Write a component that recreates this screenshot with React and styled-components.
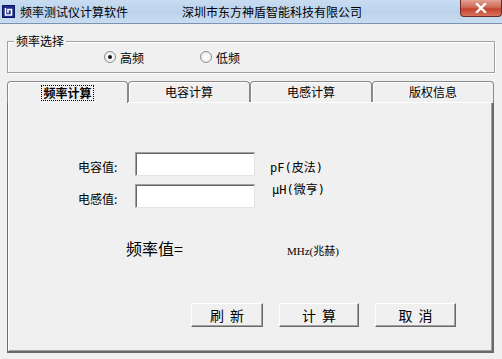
import React, { useState } from "react";
import styled, { createGlobalStyle } from "styled-components";

const GlobalStyle = createGlobalStyle`
  html, body {
    margin: 0;
    padding: 0;
    background: #f0f0f0;
  }
  body {
    font-family: "Noto Sans CJK SC", "Liberation Sans", sans-serif;
    font-size: 12px;
    color: #000;
  }
`;

const Window = styled.div`
  width: 502px;
  height: 359px;
  background: #f0f0f0;
  display: flex;
  flex-direction: column;
  overflow: hidden;
`;

const TitleBar = styled.div`
  position: relative;
  height: 23px;
  flex: none;
  display: flex;
  align-items: center;
  background: linear-gradient(to bottom, #c8dcf1 0%, #bcd3ec 50%, #c9dcf0 100%);
  border-bottom: 1px solid #7b93b2;
`;

const AppIcon = styled.div`
  width: 13px;
  height: 13px;
  margin: 0 5px 0 2px;
  background: #1a2c8c;
  border: 1px solid #0c1660;
  display: flex;
  align-items: center;
  justify-content: center;
  box-sizing: border-box;
`;

const TitleText = styled.span`
  font-size: 12px;
  line-height: 1;
  color: #000;
  margin-right: ${p => p.$gap || 0}px;
  white-space: nowrap;
`;

const CloseButton = styled.div`
  position: absolute;
  right: 0;
  top: 0;
  width: 42px;
  height: 17px;
  border-radius: 0 0 4px 4px;
  border: 1px solid #6b2b24;
  border-top: none;
  box-sizing: border-box;
  background: linear-gradient(to bottom, #e3a191 0%, #cd6c58 45%, #c2432c 55%, #d9745d 100%);
  display: flex;
  align-items: center;
  justify-content: center;
`;

const Body = styled.div`
  flex: 1;
  display: flex;
  flex-direction: column;
  padding: 0 7px;
`;

const GroupBox = styled.div`
  position: relative;
  margin-top: 17px;
  width: 488px;
  height: 32px;
  box-sizing: border-box;
  border: 1px solid #a0a0a0;
  box-shadow: inset 1px 1px 0 #fff, 1px 1px 0 #fff;
  display: flex;
  align-items: center;
  padding-left: 96px;
`;

const GroupLegend = styled.span`
  position: absolute;
  left: 6px;
  top: -9px;
  padding: 0 2px;
  background: #f0f0f0;
  font-size: 12px;
  line-height: 16px;
`;

const RadioOption = styled.label`
  display: flex;
  align-items: center;
  gap: 4px;
  width: 96px;
  font-size: 12px;
  cursor: default;
`;

const RadioDot = styled.span`
  width: 12px;
  height: 12px;
  box-sizing: border-box;
  border-radius: 50%;
  border: 1px solid #8e8f8f;
  background: radial-gradient(circle, #ffffff 0%, #e6e6e6 100%);
  display: flex;
  align-items: center;
  justify-content: center;
  &::after {
    content: "";
    width: 4px;
    height: 4px;
    border-radius: 50%;
    background: ${p => (p.$checked ? "#1a1a1a" : "transparent")};
  }
`;

const TabStrip = styled.div`
  margin-top: 8px;
  display: flex;
  height: 21px;
  position: relative;
  z-index: 1;
`;

const Tab = styled.div`
  width: ${p => p.$w}px;
  height: ${p => (p.$active ? 22 : 21)}px;
  box-sizing: border-box;
  border: 1px solid #898989;
  border-bottom: none;
  border-radius: 4px 4px 0 0;
  background: #f0f0f0;
  box-shadow: inset 1px 1px 0 #fff;
  display: flex;
  align-items: center;
  justify-content: center;
  font-size: 12px;
  font-weight: ${p => (p.$active ? 700 : 400)};
`;

const TabLabel = styled.span`
  line-height: 14px;
  padding: 0 1px;
  outline: ${p => (p.$focus ? "1px dotted #000" : "none")};
`;

const Panel = styled.div`
  width: 487px;
  height: 251px;
  box-sizing: border-box;
  border-left: 1px solid #6d6d6d;
  border-right: 2px solid #696969;
  border-bottom: 2px solid #696969;
  border-top: 1px solid #fff;
  box-shadow: inset 1px 0 0 #fff, inset -1px -1px 0 #a0a0a0;
  display: flex;
  flex-direction: column;
  padding: 49px 0 0 70px;
`;

const FormGrid = styled.div`
  display: grid;
  grid-template-columns: 42px 120px auto;
  column-gap: 15px;
  row-gap: 8px;
  align-items: center;
`;

const FieldLabel = styled.span`
  font-size: 12px;
  margin-top: ${p => p.$dy || 0}px;
`;

const TextBox = styled.input`
  width: 120px;
  height: 24px;
  box-sizing: border-box;
  border: 1px solid;
  border-color: #a0a0a0 #e3e3e3 #e3e3e3 #a0a0a0;
  box-shadow: inset 1px 1px 0 #696969;
  background: #fff;
  outline: none;
  padding: 2px 4px;
  font-family: inherit;
  font-size: 12px;
`;

const UnitText = styled.span`
  font-family: "DejaVu Sans Mono", "Noto Sans CJK SC", monospace;
  font-size: 12px;
  margin-top: ${p => p.$dy || 0}px;
  margin-left: ${p => p.$dx || 0}px;
`;

const ResultRow = styled.div`
  display: flex;
  align-items: center;
  margin-top: 28px;
  margin-left: 48px;
`;

const ResultLabel = styled.span`
  font-size: 16px;
  width: 161px;
`;

const ResultUnit = styled.span`
  font-family: "Liberation Serif", "Noto Sans CJK SC", serif;
  font-size: 11px;
  margin-top: 4px;
`;

const ButtonRow = styled.div`
  display: flex;
  gap: 16px;
  margin-top: 43px;
  margin-left: 113px;
`;

const Button = styled.button`
  width: ${p => p.$w}px;
  height: 24px;
  box-sizing: border-box;
  background: #f0f0f0;
  border: 1px solid;
  border-color: #fff #696969 #696969 #fff;
  box-shadow: inset -1px -1px 0 #a0a0a0;
  font-family: inherit;
  font-size: 14px;
  letter-spacing: 6px;
  padding: 0 0 0 6px;
  color: #000;
`;

const tabs = [
  { label: "频率计算", w: 121 },
  { label: "电容计算", w: 122 },
  { label: "电感计算", w: 122 },
  { label: "版权信息", w: 122 }
];

const App = () => {
  const [band, setBand] = useState("high");
  return (
    <Window>
      <GlobalStyle />
      <TitleBar>
        <AppIcon>
          <svg width="9" height="9" viewBox="0 0 9 9">
            <path d="M1.5 1 V8 H7.5 V2.5 H4 V6" fill="none" stroke="#fff" strokeWidth="1.6" />
          </svg>
        </AppIcon>
        <TitleText $gap={54}>频率测试仪计算软件</TitleText>
        <TitleText>深圳市东方神盾智能科技有限公司</TitleText>
        <CloseButton>
          <svg width="12" height="10" viewBox="0 0 12 10">
            <path d="M2 1 L10 9 M10 1 L2 9" stroke="#fff" strokeWidth="2.4" strokeLinecap="square" />
          </svg>
        </CloseButton>
      </TitleBar>
      <Body>
        <GroupBox>
          <GroupLegend>频率选择</GroupLegend>
          <RadioOption onClick={() => setBand("high")}>
            <RadioDot $checked={band === "high"} />
            高频
          </RadioOption>
          <RadioOption onClick={() => setBand("low")}>
            <RadioDot $checked={band === "low"} />
            低频
          </RadioOption>
        </GroupBox>
        <TabStrip>
          {tabs.map((t, i) => (
            <Tab key={t.label} $w={t.w} $active={i === 0}>
              <TabLabel $focus={i === 0}>{t.label}</TabLabel>
            </Tab>
          ))}
        </TabStrip>
        <Panel>
          <FormGrid>
            <FieldLabel $dy={4}>电容值:</FieldLabel>
            <TextBox />
            <UnitText $dy={4}>pF(皮法)</UnitText>
            <FieldLabel $dy={4}>电感值:</FieldLabel>
            <TextBox />
            <UnitText $dy={-15} $dx={2}>μH(微亨)</UnitText>
          </FormGrid>
          <ResultRow>
            <ResultLabel>频率值=</ResultLabel>
            <ResultUnit>MHz(兆赫)</ResultUnit>
          </ResultRow>
          <ButtonRow>
            <Button $w={72}>刷新</Button>
            <Button $w={80}>计算</Button>
            <Button $w={81}>取消</Button>
          </ButtonRow>
        </Panel>
      </Body>
    </Window>
  );
};

export default App;
